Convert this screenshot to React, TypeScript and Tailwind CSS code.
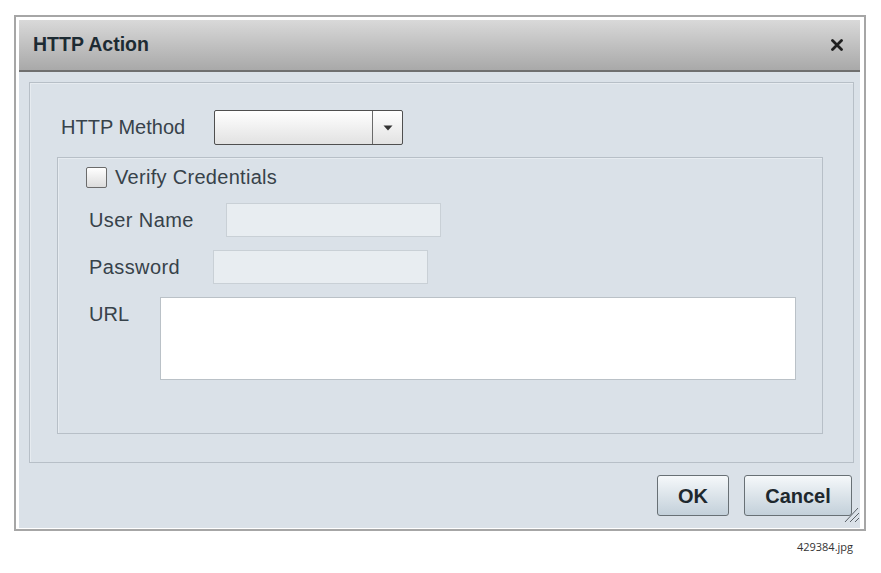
import React from "react";

function Dropdown() {
  return (
    <div className="flex h-[35px] w-[189px] rounded-[2px] border border-[#4f4f4f] bg-gradient-to-b from-white to-[#e2e2e2]">
      <div className="flex-1" />
      <div className="flex w-[30px] items-center justify-center border-l border-[#6a6a6a]">
        <svg width="10" height="6" viewBox="0 0 10 6">
          <path d="M0.5 0.5 L9.5 0.5 L5 5.5 Z" fill="#333" />
        </svg>
      </div>
    </div>
  );
}

function Field({ label, labelWidth }: { label: string; labelWidth: string }) {
  return (
    <div className="flex items-center gap-[30px] pl-[31px]">
      <span className={`${labelWidth} leading-[23px] tracking-[0.4px]`}>{label}</span>
      <div className="h-[34px] w-[215px] border border-[#c9d0d6] bg-[#e8edf1]" />
    </div>
  );
}

export default function App() {
  return (
    <div
      className="h-[573px] w-[881px] bg-white pl-[14px] pt-[15px] text-[#37424a]"
      style={{ fontFamily: '"Liberation Sans", Arial, sans-serif' }}
    >
      <div className="flex h-[516px] w-[852px] flex-col border-2 border-[#a6a6a6] bg-white pb-[1px] pl-[3px] pr-[4px] pt-[3px]">
        {/* title bar */}
        <div className="flex h-[52px] shrink-0 items-center justify-between border-b-2 border-[#6f6f6f] bg-gradient-to-b from-[#d9d9d9] to-[#a9a9a9] pl-[14px] pr-[17px]">
          <span className="text-[19.5px] font-bold text-[#1d2b33]">HTTP Action</span>
          <svg width="12" height="12" viewBox="0 0 12 12">
            <path d="M1.5 1.5 L10.5 10.5 M10.5 1.5 L1.5 10.5" stroke="#1f1f1f" strokeWidth="2.8" strokeLinecap="round" />
          </svg>
        </div>

        {/* body */}
        <div className="relative flex flex-1 flex-col bg-[#dae1e8]">
          <div className="ml-[10px] mr-[6px] mt-[10px] h-[381px] border border-[#b7bfc7] pl-[31px] pt-[27px] text-[20px] shadow-[inset_1px_1px_0_#e6ebf0]">
            <div className="flex items-center gap-[29px]">
              <span className="leading-[23px]">HTTP Method</span>
              <Dropdown />
            </div>

            <div className="-ml-[4px] mr-[30px] mt-[12px] h-[277px] border border-[#b7bfc7] pt-[8px] shadow-[inset_1px_1px_0_#e6ebf0]">
              <div className="flex items-center gap-[8px] pl-[28px]">
                <div className="h-[21px] w-[21px] rounded-[2px] border border-[#6b6b6b] bg-gradient-to-b from-white to-[#dcdcdc]" />
                <span className="leading-[23px] tracking-[0.3px]">Verify Credentials</span>
              </div>
              <div className="mt-[14px] flex flex-col gap-[13px]">
                <Field label="User Name" labelWidth="w-[107px]" />
                <Field label="Password" labelWidth="w-[94px]" />
                <div className="flex items-start gap-[29px] pl-[31px]">
                  <span className="mt-[6px] w-[42px] leading-[23px]">URL</span>
                  <div className="h-[83px] w-[636px] border border-[#bac1c7] bg-white" />
                </div>
              </div>
            </div>
          </div>

          {/* footer */}
          <div className="mr-[8px] mt-[12px] flex justify-end gap-[15px]">
            <button className="h-[41px] w-[72px] rounded-[3px] border border-[#687075] bg-gradient-to-b from-[#f5f8fa] to-[#c3d0da] text-[20px] font-bold text-[#1e282e]">
              OK
            </button>
            <button className="h-[41px] w-[108px] rounded-[3px] border border-[#687075] bg-gradient-to-b from-[#f5f8fa] to-[#c3d0da] text-[20px] font-bold text-[#1e282e]">
              Cancel
            </button>
          </div>

          {/* resize grip */}
          <svg className="absolute bottom-[5px] right-0" width="17" height="18" viewBox="0 0 17 18">
            <path d="M2 17 L15 3 M7 17 L16 8 M12 17 L16 13" stroke="#5a6066" strokeWidth="1" />
          </svg>
        </div>
      </div>

      <div
        className="mt-[8px] w-[852px] pr-[13px] text-right text-[11px] text-[#333]"
        style={{ fontFamily: '"Open Sans", sans-serif' }}
      >
        429384.jpg
      </div>
    </div>
  );
}
